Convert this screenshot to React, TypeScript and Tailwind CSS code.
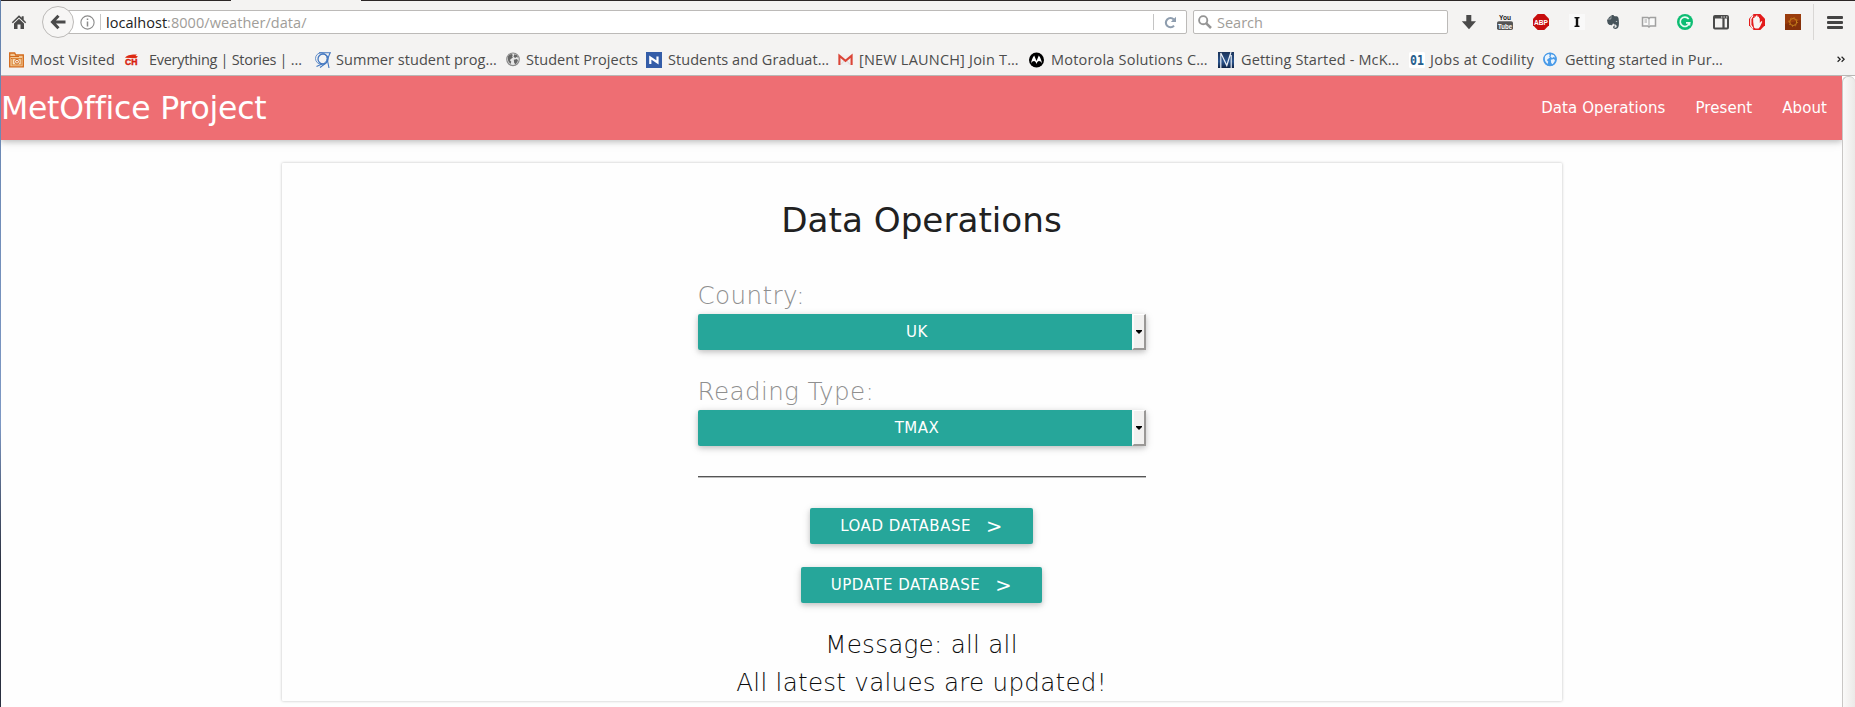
import React from "react";
import { SiEvernote } from "react-icons/si";

const UI = "font-['Open_Sans','Noto_Sans',sans-serif] text-[14.5px]";

function FolderIcon() {
  return (
    <svg width="15" height="16" viewBox="0 0 15 16">
      <path d="M.7 14.8V1h5l1 2h7.6v11.8z" fill="#f3c795" stroke="#d2691a" strokeWidth="1.3" />
      <path d="M1 4.5h9M2 6.5h11" stroke="#d2691a" />
      <rect x="3.2" y="6.7" width="9" height="6.2" fill="#fbe6c8" stroke="#d98436" />
      <circle cx="8" cy="9.7" r="2.3" fill="#fff" stroke="#d2691a" />
      <circle cx="8" cy="9.7" r=".9" fill="#d2691a" />
    </svg>
  );
}

function ChIcon() {
  return (
    <svg width="15" height="16" viewBox="0 0 15 16">
      <path d="M1 5.8C3 3 6.500 2.300 13 2.500L11.500 3.800 14 4.500 12 6.200z" fill="#dd2a12" />
      <text x="1" y="12.5" fontSize="8.5" fontWeight="bold" textLength="12.5" lengthAdjust="spacingAndGlyphs" fontFamily="Liberation Sans" fill="#d8200c" stroke="#d8200c" strokeWidth=".4">CH</text>
    </svg>
  );
}

function CernIcon() {
  return (
    <svg width="16" height="16" viewBox="0 0 16 16" fill="none" stroke="#4478c0" strokeWidth="1.1">
      <circle cx="8" cy="7" r="5" strokeWidth="1.3" />
      <circle cx="6.2" cy="6.5" r="5.7" strokeWidth=".8" />
      <path d="M4 .7h12M15 1l-3.500 9M12.500 8.500L14 16M1.500 14.500L7 12M11 11l-6 4.500" />
    </svg>
  );
}

function Globe({ base, land, rim }: { base: string; land: string; rim: string }) {
  return (
    <svg width="14" height="15" viewBox="0 0 14 15">
      <circle cx="7" cy="7.3" r="6.5" fill={base} />
      <path d="M2 4.200C3 2.800 4.200 2.200 5.500 2l1.500 1-1 1.300 1 1-2 1.700L3.800 8l1.500 1.700L4.500 12 2.600 9.800C1.700 8 1.500 6 2 4.200zM8.300 2.300l2.500.8 1.600 2.600-1.800-.6-1.400.9-1.700-1.300zM7.800 7.700l3.200-.7 1 1.800-2.300 3.600-1.500-1.400z" fill={land} />
      <circle cx="7" cy="7.3" r="6.3" fill="none" stroke={rim} strokeWidth="1.1" />
    </svg>
  );
}

function NIcon() {
  return (
    <svg width="16" height="16" viewBox="0 0 16 16">
      <rect width="16" height="16" fill="#345da8" />
      <path d="M4.300 12V5.500l7.200 5V4.500" fill="none" stroke="#fff" strokeWidth="2.2" />
    </svg>
  );
}

function GmailIcon() {
  return (
    <svg width="15" height="16" viewBox="0 0 15 16">
      <path d="M1 3h13v10H1z" fill="#f2efef" />
      <path d="M3 12.500l4.500-5 4.500 5" fill="none" stroke="#d9d9d9" />
      <path d="M1.400 13V3.800l6.100 5 6.100-5V13" fill="none" stroke="#db4537" strokeWidth="2.1" />
    </svg>
  );
}

function MotorolaIcon() {
  return (
    <svg width="15" height="16" viewBox="0 0 15 16">
      <circle cx="7.5" cy="8" r="7.5" fill="#000" />
      <path d="M5.200 3.500L7.500 9l2.300-5.500c1.800 2.300 2.700 5 3.200 8-1-1.700-1.900-2.400-3-2.400S8.300 10 7.500 12c-.8-2-1.400-2.900-2.500-2.900s-2 .7-3 2.400c.5-3 1.400-5.700 3.200-8z" fill="#fff" />
    </svg>
  );
}

function MckIcon() {
  return (
    <svg width="16" height="16" viewBox="0 0 16 16">
      <defs>
        <linearGradient id="mck" x1="0" x2="0" y1="0" y2="1"><stop stopColor="#1a3258" /><stop offset=".6" stopColor="#2c568f" /><stop offset="1" stopColor="#0e2244" /></linearGradient>
      </defs>
      <rect width="16" height="16" fill="url(#mck)" />
      <path d="M2.800 16V1l6 12.500L13 0M13.200 3v13" fill="none" stroke="#e9eef5" strokeWidth="1.2" />
    </svg>
  );
}

function CodilityIcon() {
  return (
    <svg width="16" height="16" viewBox="0 0 16 16">
      <rect width="16" height="16" rx="1.5" fill="#fff" />
      <text x="1" y="13" fontSize="14" fontWeight="bold" textLength="14" lengthAdjust="spacingAndGlyphs" fontFamily="DejaVu Sans Mono" fill="#265f8d">01</text>
    </svg>
  );
}

const bookmarks = [
  { icon: <FolderIcon />, label: "Most Visited", item: "w-[115px]", slot: "w-[21px]", track: "tracking-[0.2px]" },
  { icon: <ChIcon />, label: "Everything | Stories | …", item: "w-[191px]", slot: "w-[25px]", track: "tracking-[-0.3px]" },
  { icon: <CernIcon />, label: "Summer student prog…", item: "w-[191px]", slot: "w-[21px]", track: "tracking-[0.04px]" },
  { icon: <Globe base="#e6e6e6" land="#666" rim="#8a8a8a" />, label: "Student Projects", item: "w-[140px]", slot: "w-[20px]", track: "tracking-[0.05px]" },
  { icon: <NIcon />, label: "Students and Graduat…", item: "w-[192px]", slot: "w-[22px]", track: "tracking-[0.04px]" },
  { icon: <GmailIcon />, label: "[NEW LAUNCH] Join T…", item: "w-[191px]", slot: "w-[21px]", track: "tracking-[0.2px]" },
  { icon: <MotorolaIcon />, label: "Motorola Solutions C…", item: "w-[189px]", slot: "w-[22px]", track: "tracking-[0.2px]" },
  { icon: <MckIcon />, label: "Getting Started - McK…", item: "w-[191px]", slot: "w-[23px]", track: "tracking-[0.15px]" },
  { icon: <CodilityIcon />, label: "Jobs at Codility", item: "w-[134px]", slot: "w-[21px]", track: "tracking-[0.3px]" },
  { icon: <Globe base="#4a9be8" land="#e8f3fd" rim="#4a9be8" />, label: "Getting started in Pur…", item: "w-[190px]", slot: "w-[22px]", track: "tracking-[0.07px]" },
];

const extensions = [
  <svg key="dl" width="16" height="16" viewBox="0 0 16 16"><path d="M5.300 1h5v6.200H15L8 15.200.8 7.200h4.500z" fill="#4a4a4a" /></svg>,
  <svg key="yt" width="16" height="16" viewBox="0 0 16 16" overflow="visible">
    <text x="2" y="6.2" fontSize="8" fontWeight="bold" textLength="12" lengthAdjust="spacingAndGlyphs" fontFamily="Liberation Sans" fill="#222">You</text>
    <rect y="7.3" width="16" height="8.7" rx="1.8" fill="#555" />
    <text x="1" y="14.5" fontSize="8" fontWeight="bold" textLength="14" lengthAdjust="spacingAndGlyphs" fontFamily="Liberation Sans" fill="#fff">Tube</text>
  </svg>,
  <svg key="abp" width="16" height="16" viewBox="0 0 16 16">
    <path d="M4.700 0h6.600L16 4.700v6.600L11.300 16H4.700L0 11.300V4.700z" fill="#c70d0d" />
    <text x="1" y="10.8" fontSize="7.5" fontWeight="bold" textLength="14" lengthAdjust="spacingAndGlyphs" fontFamily="Liberation Sans" fill="#fff">ABP</text>
  </svg>,
  <svg key="ip" width="16" height="16" viewBox="0 0 16 16">
    <rect width="16" height="16" fill="#f9f9f9" />
    <path d="M5.500 3h5v1.200l-1.300.3v7l1.300.3V13h-5v-1.200l1.300-.3v-7l-1.300-.3z" fill="#111" />
  </svg>,
  <SiEvernote key="ev" size={14} color="#46535a" />,
  <svg key="bk" width="16" height="16" viewBox="0 0 16 16" fill="none">
    <path d="M1.500 3.500h5.300L8 4.500l1.200-1h5.300v8.500H9.300L8 13l-1.300-1H1.500z" fill="#fafafa" stroke="#a0a0a0" strokeWidth="1.5" />
    <path d="M8 4v8.500M3.500 6H6M3.500 8H6" stroke="#a5a5a5" />
  </svg>,
  <svg key="gr" width="16" height="16" viewBox="0 0 16 16">
    <circle cx="8" cy="8" r="8" fill="#0dbd73" />
    <path d="M11.700 5A4.700 4.700 0 1 0 12.500 8.800H9" fill="none" stroke="#e9fbf3" strokeWidth="1.7" />
    <path d="M12.700 8v3.500" stroke="#e9fbf3" strokeWidth="1.2" />
  </svg>,
  <svg key="sb" width="16" height="16" viewBox="0 0 16 16">
    <rect x="1" y="2" width="14" height="12.5" rx="1" fill="#f4f3f2" stroke="#4a4a4a" strokeWidth="2" />
    <path d="M1 3.500h14M10.500 3v11" stroke="#4a4a4a" strokeWidth="2.2" />
    <path d="M8 3h1.300M10.500 3h1.300M13 3h1.300" stroke="#f4f3f2" strokeWidth="1.2" />
  </svg>,
  <svg key="ab" width="16" height="16" viewBox="0 0 16 16">
    <path d="M4.700 0h6.600L16 4.700v6.600L11.300 16H4.700L0 11.300V4.700z" fill="#e31b1b" />
    <path d="M4 1.500L1.800 5v6L4 14.500" fill="none" stroke="#fff" strokeWidth="1.2" />
    <path d="M5 13.500L4.200 8V4h1.300V2.500H7v-1h1.500v1.200H10v1.500h.8V9l1.500-2 1 .8-2.300 5-1.500 1.700H6.500z" fill="#f8f4f2" />
  </svg>,
  <svg key="or" width="16" height="16" viewBox="0 0 16 16">
    <rect width="16" height="16" fill="#84300a" />
    <path d="M0 0h16v6L0 10z" fill="#9a3c0c" />
    <circle cx="8.2" cy="8" r="3.5" fill="none" stroke="#c9821c" strokeWidth="1" />
    <circle cx="8.2" cy="8" r="4.4" fill="none" stroke="#c9821c" strokeWidth="1" strokeDasharray="1.1 2.35" />
  </svg>,
];

function AddressRow() {
  return (
    <div className="flex h-[43px] items-center pb-px">
      <svg className="ml-[10px] h-4 w-4 shrink-0" viewBox="0 0 16 16">
        <path d="M8 1.200l2.700 2.600V2.300h2v3.400l2.500 2.500-1 1L8 3.400 1.800 9.200l-1-1z" fill="#4a4a4a" />
        <path d="M8 4.800l5 4.700V15H9.500v-4.500h-3V15H3V9.500z" fill="#4a4a4a" />
      </svg>
      <div className="z-10 ml-[15px] flex h-8 w-8 shrink-0 items-center justify-center rounded-full border border-[#bcbab8] bg-[#f7f6f5]">
        <svg width="16" height="16" viewBox="0 0 16 16" fill="none" stroke="#4a4a4a" strokeWidth="3">
          <path d="M8.500 1.800L2.500 8l6 6.200M2.500 8h13" />
        </svg>
      </div>
      <div className="-ml-[10px] flex h-6 w-[1123px] shrink-0 items-center rounded-r-[2px] border border-[#bcbab8] bg-white">
        <svg className="ml-[15px] h-[15px] w-[15px] shrink-0" viewBox="0 0 15 15">
          <circle cx="7.5" cy="7.5" r="6.6" fill="none" stroke="#8b8b8b" strokeWidth="1.1" />
          <path d="M7.500 6.400v5M7.500 3.500v1.600" stroke="#8b8b8b" strokeWidth="1.5" />
        </svg>
        <div className="ml-[5px] h-4 w-px shrink-0 bg-[#c8c8c8]" />
        <div className={`${UI} ml-[5px] grow whitespace-pre pt-px leading-[22px] tracking-[0.04px] text-[#a09d99]`}>
          <span className="text-[#222]">localhost</span>:8000/weather/data/
        </div>
        <div className="h-4 w-px shrink-0 bg-[#c4c4c4]" />
        <svg className="ml-[10px] mr-[9px] h-[13px] w-[13px] shrink-0" viewBox="0 0 13 13">
          <path d="M10 9.600A4.600 4.600 0 1 1 9.800 3.500" fill="none" stroke="#8e9dae" strokeWidth="2.1" />
          <path d="M12 .8V6H6.800z" fill="#8e9dae" />
        </svg>
      </div>
      <div className="ml-[6px] flex h-6 w-[255px] shrink-0 items-center rounded-[2px] border border-[#bcbab8] bg-white">
        <svg className="ml-[4px] h-[14px] w-[14px] shrink-0" viewBox="0 0 14 14" fill="none" stroke="#959595">
          <circle cx="5.2" cy="5.2" r="4.1" strokeWidth="1.9" />
          <path d="M8.300 8.300l4.700 4.700" strokeWidth="2.5" />
        </svg>
        <span className={`${UI} ml-[5px] pt-px leading-[22px] text-[#a09d99]`}>Search</span>
      </div>
      <div className="ml-[13px] flex shrink-0 gap-[20px]">
        {extensions.map((icon, i) => (
          <div key={i} className="flex h-4 w-4 items-center justify-center">{icon}</div>
        ))}
      </div>
      <div className="ml-[12px] h-9 w-px shrink-0 bg-[#d9d7d5]" />
      <div className="ml-[13px] flex w-4 shrink-0 flex-col gap-[2px]">
        <div className="h-[3px] rounded-[1px] bg-[#444]" />
        <div className="h-[3px] rounded-[1px] bg-[#444]" />
        <div className="h-[3px] rounded-[1px] bg-[#444]" />
      </div>
    </div>
  );
}

function BookmarksRow() {
  return (
    <div className={`${UI} flex h-[31px] items-center pl-2 text-[#4c4c4c]`}>
      {bookmarks.map((b) => (
        <div key={b.label} className={`${b.item} flex shrink-0 items-center`}>
          <span className={`${b.slot} shrink-0`}>{b.icon}</span>
          <span className={`${b.track} whitespace-nowrap leading-5`}>{b.label}</span>
        </div>
      ))}
      <svg className="ml-auto mr-[10px]" width="8" height="7" viewBox="0 0 8 7" fill="none" stroke="#222" strokeWidth="1.2">
        <path d="M.6.800l2.600 2.500L.6 5.800M4.600.800l2.600 2.500-2.600 2.500" />
      </svg>
    </div>
  );
}

const RAISED = "rounded-[2px] bg-[#26a69a] text-[15px] leading-9 tracking-[0.5px] text-white shadow-[0_2px_5px_0_rgba(0,0,0,0.16),0_2px_10px_0_rgba(0,0,0,0.12)]";

function Select({ label, value }: { label: string; value: string }) {
  return (
    <div className="w-[448px]">
      <div className="text-[24.6px] font-extralight leading-[27px] tracking-[0.4px] text-[#8f8f8f]">{label}</div>
      <div className={`${RAISED} mt-[5px] flex h-9`}>
        <div className="w-[434px] pl-[5px] text-center">{value}</div>
        <div className="flex w-[14px] items-center justify-center border-t border-r-2 border-b-2 border-l-2 border-t-white border-r-[#9a9896] border-b-[#9a9896] border-l-[#fbfbfa] bg-[#f2f1f0]">
          <svg width="6" height="4" viewBox="0 0 6 4"><path d="M0 0h6v1L3 4 0 1z" fill="#000" /></svg>
        </div>
      </div>
    </div>
  );
}

function ActionButton({ children }: { children: string }) {
  return (
    <button className={`${RAISED} flex h-9 items-center px-[30px]`}>
      {children}
      <span className="ml-[15px] pt-px text-[19.5px]">&gt;</span>
    </button>
  );
}

export default function App() {
  return (
    <div className="flex h-[707px] w-[1855px] overflow-hidden bg-white font-['DejaVu_Sans',sans-serif]">
      <div className="w-px shrink-0 bg-linear-to-b from-[#6482ad] via-[#7d98c4] via-60% to-[#2a3040] to-80%" />
      <div className="flex min-w-0 grow flex-col">
        <header className="h-[76px] shrink-0 border-b border-[#b9b7b5] bg-[#f4f3f2]">
          <div className="flex h-px justify-between">
            <div className="w-[230px] bg-[#2c2626]" />
            <div className="w-[1494px] bg-[#2c2626]" />
          </div>
          <AddressRow />
          <BookmarksRow />
        </header>
        <div className="flex min-h-0 grow">
          <main className="flex w-[1841px] shrink-0 flex-col items-center overflow-hidden bg-[#fefefe]">
            <nav className="flex h-16 w-full shrink-0 items-center justify-between bg-[#ee6e73] text-white shadow-[0_2px_5px_0_rgba(0,0,0,0.16),0_2px_10px_0_rgba(0,0,0,0.12)]">
              <span className="pt-px text-[31.5px] tracking-[-0.22px]">MetOffice Project</span>
              <ul className="flex text-[15px] tracking-[0.08px]">
                <li className="px-[15px]">Data Operations</li>
                <li className="px-[15px]">Present</li>
                <li className="px-[15px]">About</li>
              </ul>
            </nav>
            <section className="mt-[23px] flex h-[538px] w-[1280px] shrink-0 flex-col items-center rounded-[1px] bg-[#fefefe] pt-[38px] shadow-[0_0_3px_0_rgba(0,0,0,0.26)]">
              <h4 className="text-[34.2px] leading-[38px] text-[#212121]">Data Operations</h4>
              <div className="mt-[43px] flex shrink-0 flex-col gap-[28px]">
                <Select label="Country:" value="UK" />
                <Select label="Reading Type:" value="TMAX" />
              </div>
              <div className="mt-[30px] h-[2px] w-[448px] shrink-0 border-t border-[#555] bg-[#bbb]" />
              <div className="mt-[30px] flex shrink-0 flex-col items-center gap-[23px]">
                <ActionButton>LOAD DATABASE</ActionButton>
                <ActionButton>UPDATE DATABASE</ActionButton>
              </div>
              <div className="mt-[23px] shrink-0 text-center text-[24.6px] font-extralight leading-[38px] tracking-[0.26px] text-[#0c0c0c]">
                <p>Message: all all</p>
                <p>All latest values are updated!</p>
              </div>
            </section>
          </main>
          <div className="grow rounded-tl-[6px] rounded-tr-[6px] border-t border-l border-[#c9c7c5] bg-linear-to-r from-[#fafaf9] to-[#ebe9e7]" />
        </div>
      </div>
    </div>
  );
}
